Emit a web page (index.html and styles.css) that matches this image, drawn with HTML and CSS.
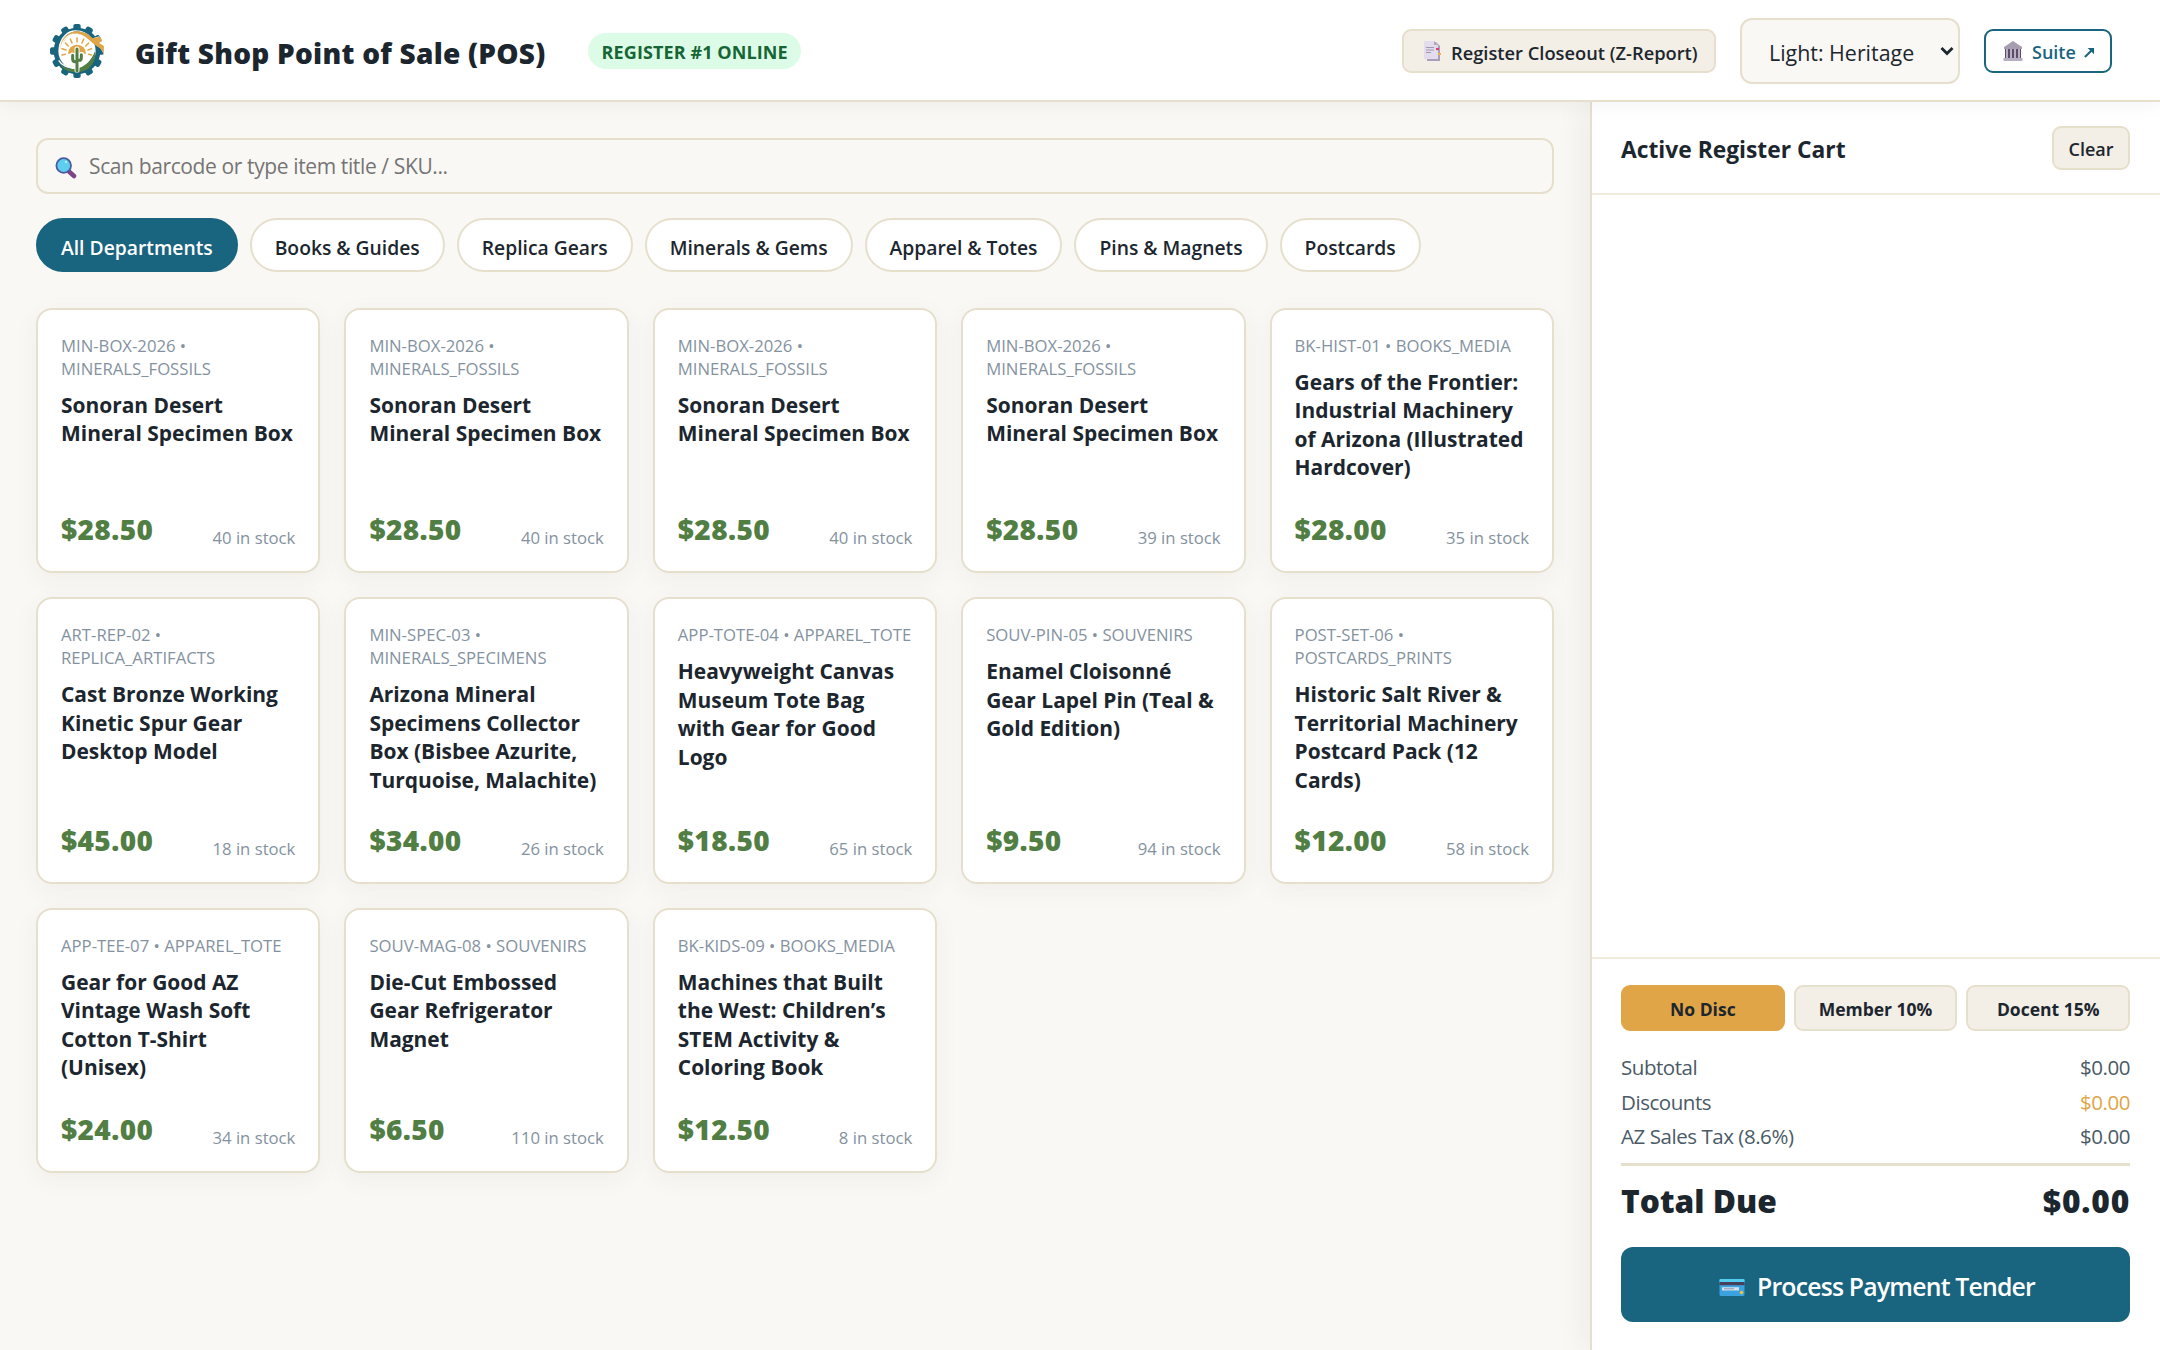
FILE: index.html
```html
<!DOCTYPE html>
<html lang="en">
<head>
  <meta charset="UTF-8">
  <meta name="viewport" content="width=device-width, initial-scale=1">
  <title>Gift Shop Point of Sale (POS)</title>
  <link rel="stylesheet" href="styles.css">
</head>
<body>
  <header class="topbar">
    <div class="brand">
      <svg class="logo" viewBox="32 40 162 168">
        <g fill="#19647e">
          <rect x="102" y="43" width="22" height="162" rx="6"/>
          <rect x="102" y="43" width="22" height="162" rx="6" transform="rotate(30 113 124)"/>
          <rect x="102" y="43" width="22" height="162" rx="6" transform="rotate(60 113 124)"/>
          <rect x="102" y="43" width="22" height="162" rx="6" transform="rotate(90 113 124)"/>
          <rect x="102" y="43" width="22" height="162" rx="6" transform="rotate(120 113 124)"/>
          <rect x="102" y="43" width="22" height="162" rx="6" transform="rotate(150 113 124)"/>
          <circle cx="113" cy="124" r="70"/>
        </g>
        <circle cx="113" cy="124" r="56" fill="#fff"/>
        <!-- gold swoosh over the gear -->
        <path d="M62 128 C58 85 90 62 120 66 C150 70 172 92 194 134 L194 112 L180 102 L188 94 L180 80 L160 86 C140 64 100 50 76 76 C60 92 56 112 62 128Z" fill="#fff"/>
        <path d="M64 122 C62 90 88 69 113 69 C142 69 160 100 188 116 L193 134 L193 110 L178 100 L188 94 L182 82 L160 86 C130 56 96 62 80 78 C66 92 62 106 64 122Z" fill="#e0a546"/>
        <path d="M70 104 C80 78 100 70 116 72 C140 76 154 98 176 112 C190 120 193 128 193 134 L193 108 L178 100 L188 94 L182 81 L160 88 C130 56 90 62 70 104Z" fill="#e0a546"/>
        <path d="M60 160 C80 186 142 192 167 122 C172 160 148 188 113 188 C88 188 68 178 60 160Z" fill="#517e43"/>
        <path d="M58 152 C76 184 140 186 165 124" fill="none" stroke="#fff" stroke-width="4"/>
        <path d="M86 132 a27 27 0 1 1 54 0z" fill="#e0a546"/>
        <g stroke="#e0a546" stroke-width="4.500" stroke-linecap="round">
          <path d="M113 97V84M98 100l-5-12M128 100l5-12M87 109l-9-9M139 109l9-9M80 121l-12-4M146 121l11-4M78 134l-10 2M148 134l9 2"/>
        </g>
        <path d="M113 182V118M113 156h-6q-8 0-8-8v-12M113 152h6q8 0 8-8v-10" fill="none" stroke="#fff" stroke-width="15" stroke-linecap="round"/>
        <path d="M113 184V118M113 156h-6q-7 0-7-8v-11M113 152h6q7 0 7-8v-9" fill="none" stroke="#517e43" stroke-width="9" stroke-linecap="round"/>
      </svg>
      <h1>Gift Shop Point of Sale (POS)</h1>
      <span class="badge">REGISTER #1 ONLINE</span>
    </div>
    <div class="actions">
      <button class="btn closeout">
        <svg class="ico" viewBox="0 0 22 22">
          <path d="M6 2h9l4 4v15H6z" fill="#aa9fb8"/>
          <path d="M3 1h10l4 4v14H3z" fill="#e3dcec"/>
          <path d="M13 1l4 4h-4z" fill="#b3a6bf"/>
          <path d="M5 7.500h8M5 10h8M5 12.500h5" stroke="#a297ae" stroke-width="1.200"/>
          <path d="M15 9h3" stroke="#e0407a" stroke-width="2.200"/>
          <path d="M17 14h3" stroke="#f2b04a" stroke-width="2"/>
        </svg>
        <span>Register Closeout (Z-Report)</span>
      </button>
      <div class="theme">
        <span>Light: Heritage</span>
        <svg class="chev" viewBox="0 0 14 10"><path d="M1.500 2l5.500 5.500L12.500 2" fill="none" stroke="#1c262e" stroke-width="2.800"/></svg>
      </div>
      <a class="btn suite">
        <svg class="ico" viewBox="0 0 22 22">
          <path d="M11 1l9 6v2H2V7z" fill="#a69db0"/>
          <path d="M3 9h16v9H3z" fill="#5b4c68"/>
          <path d="M5 9v9M9 9v9M13 9v9M17 9v9" stroke="#c4bccd" stroke-width="1.800"/>
          <path d="M1.500 18h19v3h-19z" fill="#b7aec1"/>
        </svg>
        <span>Suite</span>
        <svg class="arrow" viewBox="0 0 12 12"><path d="M1 11L9 3" fill="none" stroke="#19647e" stroke-width="2.200"/><path d="M4 1h7v7z" fill="#19647e"/></svg>
      </a>
    </div>
  </header>

  <div class="layout">
    <main class="catalog">
      <div class="search">
        <svg class="glass" viewBox="0 0 22 22">
          <path d="M14 14.500l5 4.500" stroke="#7d4487" stroke-width="4.500" stroke-linecap="round"/>
          <circle cx="8.700" cy="8.500" r="7.300" fill="#5dcdf0" stroke="#4b5a9e" stroke-width="1.800"/>
          <circle cx="11" cy="5" r="1.200" fill="#b5ecfb"/>
        </svg>
        <span>Scan barcode or type item title / SKU...</span>
      </div>

      <nav class="pills">
        <button class="pill active">All Departments</button>
        <button class="pill">Books &amp; Guides</button>
        <button class="pill">Replica Gears</button>
        <button class="pill">Minerals &amp; Gems</button>
        <button class="pill">Apparel &amp; Totes</button>
        <button class="pill">Pins &amp; Magnets</button>
        <button class="pill">Postcards</button>
      </nav>

      <section class="grid">
        <article class="card">
          <div class="sku">MIN-BOX-2026 •<br>MINERALS_FOSSILS</div>
          <h3>Sonoran Desert<br>Mineral Specimen Box</h3>
          <div class="foot"><span class="price">$28.50</span><span class="stock">40 in stock</span></div>
        </article>
        <article class="card">
          <div class="sku">MIN-BOX-2026 •<br>MINERALS_FOSSILS</div>
          <h3>Sonoran Desert<br>Mineral Specimen Box</h3>
          <div class="foot"><span class="price">$28.50</span><span class="stock">40 in stock</span></div>
        </article>
        <article class="card">
          <div class="sku">MIN-BOX-2026 •<br>MINERALS_FOSSILS</div>
          <h3>Sonoran Desert<br>Mineral Specimen Box</h3>
          <div class="foot"><span class="price">$28.50</span><span class="stock">40 in stock</span></div>
        </article>
        <article class="card">
          <div class="sku">MIN-BOX-2026 •<br>MINERALS_FOSSILS</div>
          <h3>Sonoran Desert<br>Mineral Specimen Box</h3>
          <div class="foot"><span class="price">$28.50</span><span class="stock">39 in stock</span></div>
        </article>
        <article class="card">
          <div class="sku">BK-HIST-01 • BOOKS_MEDIA</div>
          <h3>Gears of the Frontier:<br>Industrial Machinery<br>of Arizona (Illustrated<br>Hardcover)</h3>
          <div class="foot"><span class="price">$28.00</span><span class="stock">35 in stock</span></div>
        </article>

        <article class="card">
          <div class="sku">ART-REP-02 •<br>REPLICA_ARTIFACTS</div>
          <h3>Cast Bronze Working<br>Kinetic Spur Gear<br>Desktop Model</h3>
          <div class="foot"><span class="price">$45.00</span><span class="stock">18 in stock</span></div>
        </article>
        <article class="card">
          <div class="sku">MIN-SPEC-03 •<br>MINERALS_SPECIMENS</div>
          <h3>Arizona Mineral<br>Specimens Collector<br>Box (Bisbee Azurite,<br>Turquoise, Malachite)</h3>
          <div class="foot"><span class="price">$34.00</span><span class="stock">26 in stock</span></div>
        </article>
        <article class="card">
          <div class="sku">APP-TOTE-04 • APPAREL_TOTE</div>
          <h3>Heavyweight Canvas<br>Museum Tote Bag<br>with Gear for Good<br>Logo</h3>
          <div class="foot"><span class="price">$18.50</span><span class="stock">65 in stock</span></div>
        </article>
        <article class="card">
          <div class="sku">SOUV-PIN-05 • SOUVENIRS</div>
          <h3>Enamel Cloisonné<br>Gear Lapel Pin (Teal &amp;<br>Gold Edition)</h3>
          <div class="foot"><span class="price">$9.50</span><span class="stock">94 in stock</span></div>
        </article>
        <article class="card">
          <div class="sku">POST-SET-06 •<br>POSTCARDS_PRINTS</div>
          <h3>Historic Salt River &amp;<br>Territorial Machinery<br>Postcard Pack (12<br>Cards)</h3>
          <div class="foot"><span class="price">$12.00</span><span class="stock">58 in stock</span></div>
        </article>

        <article class="card">
          <div class="sku">APP-TEE-07 • APPAREL_TOTE</div>
          <h3>Gear for Good AZ<br>Vintage Wash Soft<br>Cotton T-Shirt<br>(Unisex)</h3>
          <div class="foot"><span class="price">$24.00</span><span class="stock">34 in stock</span></div>
        </article>
        <article class="card">
          <div class="sku">SOUV-MAG-08 • SOUVENIRS</div>
          <h3>Die-Cut Embossed<br>Gear Refrigerator<br>Magnet</h3>
          <div class="foot"><span class="price">$6.50</span><span class="stock">110 in stock</span></div>
        </article>
        <article class="card">
          <div class="sku">BK-KIDS-09 • BOOKS_MEDIA</div>
          <h3>Machines that Built<br>the West: Children’s<br>STEM Activity &amp;<br>Coloring Book</h3>
          <div class="foot"><span class="price">$12.50</span><span class="stock">8 in stock</span></div>
        </article>
      </section>
    </main>

    <aside class="cart">
      <div class="cart-head">
        <h2>Active Register Cart</h2>
        <button class="btn clear">Clear</button>
      </div>
      <div class="cart-items"></div>
      <div class="cart-foot">
        <div class="discs">
          <button class="disc on">No Disc</button>
          <button class="disc">Member 10%</button>
          <button class="disc">Docent 15%</button>
        </div>
        <div class="line"><span>Subtotal</span><span>$0.00</span></div>
        <div class="line"><span>Discounts</span><span class="gold">$0.00</span></div>
        <div class="line"><span>AZ Sales Tax (8.6%)</span><span>$0.00</span></div>
        <div class="total"><span>Total Due</span><span class="sum">$0.00</span></div>
        <button class="pay">
          <svg class="card-ico" viewBox="0 0 26 20">
            <rect x=".5" y="1" width="25" height="17" rx="1.500" fill="#3ba3e0"/>
            <rect x=".5" y="1" width="25" height="4" rx="1" fill="#55cdf0"/>
            <rect x=".5" y="4" width="25" height="3.200" fill="#47405c"/>
            <rect x="3" y="9.200" width="17" height="3.300" fill="#d5dff0"/>
            <path d="M5 10.800h10" stroke="#8d97b0"/>
            <circle cx="22.500" cy="14.500" r="1.800" fill="#f0c040"/>
          </svg>
          <span>Process Payment Tender</span>
        </button>
      </div>
    </aside>
  </div>
</body>
</html>
```

FILE: styles.css
```css
*{
  box-sizing: border-box;
  margin: 0;
  padding: 0;
}
:root{
  --teal: #19647e;
  --gold: #e0a546;
  --ink: #1c262e;
  --line: #e6dfcc;
  --bg: #faf8f4;
  --sand: #f3eee6;
}
body{
  height: 1350px;
  display: flex;
  flex-direction: column;
  overflow: hidden;
  background: var(--bg);
  color: var(--ink);
  font-family: "Open Sans", "Noto Sans", sans-serif;
  white-space: nowrap;
}
button{
  font-family: inherit;
  color: inherit;
}

/* top bar */
.topbar{
  height: 102px;
  flex: none;
  display: flex;
  justify-content: space-between;
  align-items: center;
  padding: 2px 48px 0 50px;
  background: #fff;
  border-bottom: 2px solid var(--line);
  box-shadow: 0 3px 18px rgba(28,38,46,.05);
  position: relative;
}
.brand, .actions{
  display: flex;
  align-items: center;
}
.logo{
  width: 54px;
  height: 56px;
}
h1{
  margin-left: 31px;
  padding-top: 3px;
  font-size: 28px;
  font-weight: 800;
  line-height: 40px;
  letter-spacing: .25px;
}
.badge{
  margin-left: 42px;
  height: 36px;
  padding: 0 13px 0 14px;
  border-radius: 18px;
  background: #dcfce7;
  color: #166534;
  font-size: 18px;
  font-weight: 700;
  line-height: 38px;
  letter-spacing: .1px;
}
.actions{
  gap: 24px;
}
.btn{
  display: flex;
  align-items: center;
  height: 44px;
  border: 2px solid var(--line);
  border-radius: 9px;
  background: var(--sand);
  font-size: 18px;
  font-weight: 600;
}
.btn span{
  padding-top: 2px;
}
.ico{
  width: 22px;
  height: 22px;
}
.closeout{
  width: 314px;
  padding-left: 17px;
  gap: 8px;
  font-size: 18.300px;
}
.theme{
  width: 220px;
  height: 66px;
  padding: 0 4px 0 27px;
  display: flex;
  align-items: center;
  justify-content: space-between;
  border: 2px solid var(--line);
  border-radius: 12px;
  background: var(--bg);
  font-size: 21.400px;
  font-weight: 500;
}
.theme span{
  padding-top: 2px;
}
.chev{
  width: 14px;
  height: 10px;
}
.suite{
  width: 128px;
  padding-left: 16px;
  gap: 8px;
  background: #fff;
  border-color: var(--teal);
  color: var(--teal);
}
.arrow{
  width: 11px;
  height: 11px;
  margin-top: 2px;
}

/* product side */
.layout{
  flex: 1;
  display: flex;
  min-height: 0;
}
.catalog{
  flex: 1;
  padding: 36px;
}
.search{
  height: 56px;
  display: flex;
  align-items: center;
  gap: 12px;
  padding-left: 17px;
  border: 2px solid var(--line);
  border-radius: 12px;
  color: #757575;
  font-size: 21px;
  letter-spacing: -.38px;
}
.glass{
  width: 22px;
  height: 22px;
  margin-top: 3px;
}
.pills{
  display: flex;
  gap: 12px;
  margin: 24px 0 35.500px;
}
.pill{
  height: 54px;
  padding: 4px 23px 0;
  border: 2px solid var(--line);
  border-radius: 27px;
  background: #fff;
  font-size: 19.300px;
  font-weight: 600;
}
.pill.active{
  background: var(--teal);
  border-color: var(--teal);
  color: #fff;
}
.grid{
  display: grid;
  grid-template-columns: repeat(5, 1fr);
  gap: 24px;
}
.card{
  display: flex;
  flex-direction: column;
  padding: 23px;
  min-height: 265.500px;
  border: 2px solid var(--line);
  border-radius: 16px;
  background: #fff;
  box-shadow: 0 6px 24px rgba(28,60,70,.05);
}
.sku{
  color: #8492a0;
  font-size: 16.700px;
  line-height: 23px;
  padding-top: 1px;
  margin-bottom: 11px;
}
.card h3{
  font-size: 20.950px;
  font-weight: 700;
  line-height: 28.500px;
}
.foot{
  margin-top: auto;
  padding-top: 27.500px;
  display: flex;
  justify-content: space-between;
  align-items: flex-end;
}
.price{
  color: #517e43;
  font-size: 28px;
  font-weight: 800;
  line-height: 37px;
  letter-spacing: .4px;
}
.stock{
  color: #8492a0;
  font-size: 16.700px;
  line-height: 21px;
}

/* cart */
.cart{
  width: 570px;
  display: flex;
  flex-direction: column;
  background: #fff;
  border-left: 2px solid var(--line);
  box-shadow: -6px 0 30px rgba(28,38,46,.06);
}
.cart-head{
  height: 93px;
  display: flex;
  justify-content: space-between;
  align-items: center;
  padding: 0 30px 0 29px;
  border-bottom: 2px solid #f0ebdd;
}
h2{
  padding-top: 3px;
  font-size: 22.800px;
  font-weight: 700;
}
.clear{
  width: 78px;
  padding-top: 2px;
  justify-content: center;
}
.cart-items{
  flex: 1;
}
.cart-foot{
  height: 393px;
  padding: 26px 30px 0 29px;
  border-top: 2px solid #f0ebdd;
}
.discs{
  display: flex;
  gap: 9px;
  margin-bottom: 19px;
}
.disc{
  flex: 1;
  height: 46px;
  padding-top: 2px;
  border: 2px solid var(--line);
  border-radius: 9px;
  background: var(--sand);
  font-size: 17.500px;
  font-weight: 700;
}
.disc.on{
  background: var(--gold);
  border-color: var(--gold);
}
.line{
  display: flex;
  justify-content: space-between;
  height: 34.500px;
  line-height: 34.500px;
  font-size: 20.500px;
  letter-spacing: -.45px;
  color: #4a5a66;
}
.gold{
  color: var(--gold);
}
.total{
  display: flex;
  justify-content: space-between;
  margin: 9px 0 23px;
  border-top: 3px solid var(--line);
  padding-top: 12px;
  font-size: 31.700px;
  font-weight: 800;
  line-height: 46px;
}
.sum{
  letter-spacing: .8px;
}
.pay{
  width: 100%;
  height: 75px;
  display: flex;
  align-items: center;
  justify-content: center;
  gap: 12px;
  border: 0;
  border-radius: 12px;
  background: var(--teal);
  color: #fff;
  font-size: 24.800px;
  font-weight: 600;
  letter-spacing: -.8px;
}
.pay span{
  padding-top: 4px;
}
.card-ico{
  width: 26px;
  height: 20px;
  margin: 8px 0 0 3px;
}
```
